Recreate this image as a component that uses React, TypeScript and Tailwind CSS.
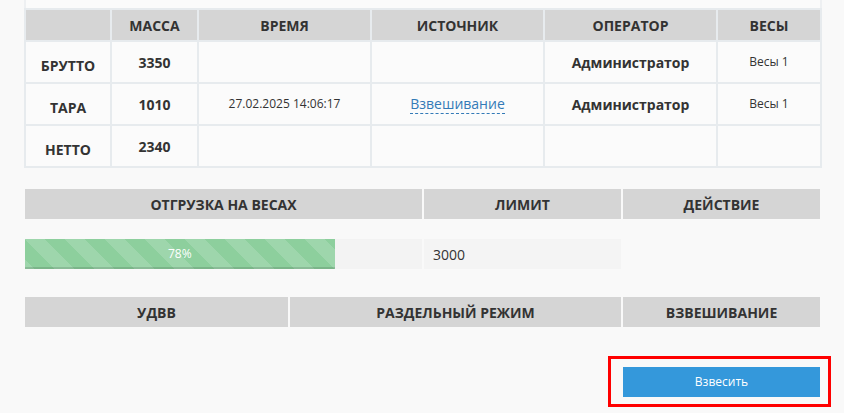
import React from 'react';

const headCell = 'bg-[#d5d5d5] flex items-center justify-center text-[14px] font-bold text-[#333]';
const bodyCell = 'bg-[#fbfbfb] flex items-center justify-center text-[#333]';

const rows = [
  { label: 'БРУТТО', mass: '3350', time: '', source: false, operator: 'Администратор', scales: 'Весы 1' },
  { label: 'ТАРА', mass: '1010', time: '27.02.2025 14:06:17', source: true, operator: 'Администратор', scales: 'Весы 1' },
  { label: 'НЕТТО', mass: '2340', time: '', source: false, operator: '', scales: '' },
];

export default function App() {
  const progress = 78;

  return (
    <div className="w-[844px] h-[413px] bg-[#f9f9f9] overflow-hidden" style={{ fontFamily: '"Open Sans", "Liberation Sans", sans-serif' }}>
      <div className="pl-[24px] w-[822px]">
        {/* tail of the panel above */}
        <div className="h-[8px] border-x-2 border-[#eef0f2] bg-[#fbfbfb]" />

        {/* weighing table */}
        <div className="grid grid-cols-[84px_85px_171px_171px_171px_102px] grid-rows-[30px_40px_40px_40px] gap-[2px] p-[2px] bg-[#e7ebee]">
          <div className={headCell} />
          <div className={headCell}>МАССА</div>
          <div className={headCell}>ВРЕМЯ</div>
          <div className={headCell}>ИСТОЧНИК</div>
          <div className={headCell}>ОПЕРАТОР</div>
          <div className={headCell}>ВЕСЫ</div>
          {rows.map((r) => (
            <React.Fragment key={r.label}>
              <div className={`${bodyCell} pt-[6px] text-[14px] font-bold`}>{r.label}</div>
              <div className={`${bodyCell} text-[14px] font-bold`}>{r.mass}</div>
              <div className={`${bodyCell} text-[12px]`}>{r.time}</div>
              <div className={bodyCell}>
                {r.source && (
                  <span className="text-[14px] leading-[19px] text-[#337ab7] border-b border-dashed border-[#337ab7]">Взвешивание</span>
                )}
              </div>
              <div className={`${bodyCell} text-[14px] font-bold`}>{r.operator}</div>
              <div className={`${bodyCell} text-[12px]`}>{r.scales}</div>
            </React.Fragment>
          ))}
        </div>
      </div>

      {/* shipment */}
      <div className="ml-[25px] mt-[21px] w-[795px]">
        <div className="grid grid-cols-[397px_197px_197px] gap-x-[2px]">
          <div className={`${headCell} h-[30px]`}>ОТГРУЗКА НА ВЕСАХ</div>
          <div className={`${headCell} h-[30px]`}>ЛИМИТ</div>
          <div className={`${headCell} h-[30px]`}>ДЕЙСТВИЕ</div>

          <div className="mt-[20px] h-[30px] bg-[#f3f3f3]">
            <div
              className="h-full flex items-center justify-center text-[12px] text-white bg-[#8dcf9d] bg-[linear-gradient(45deg,rgba(255,255,255,.15)_25%,transparent_25%,transparent_50%,rgba(255,255,255,.15)_50%,rgba(255,255,255,.15)_75%,transparent_75%,transparent)] bg-[length:40px_40px] shadow-[inset_0_-2px_0_rgba(0,0,0,0.12)]"
              style={{ width: `${progress}%` }}
            >
              {progress}%
            </div>
          </div>
          <div className="mt-[20px] h-[30px] bg-[#f4f4f4] flex items-center pl-[9px] text-[14px] text-[#333]">3000</div>
          <div className="mt-[20px] h-[30px]" />
        </div>
      </div>

      {/* mode */}
      <div className="ml-[25px] mt-[28px] w-[795px] grid grid-cols-[263px_331px_197px] gap-x-[2px]">
        <div className={`${headCell} h-[30px]`}>УДВВ</div>
        <div className={`${headCell} h-[30px]`}>РАЗДЕЛЬНЫЙ РЕЖИМ</div>
        <div className={`${headCell} h-[30px]`}>ВЗВЕШИВАНИЕ</div>
      </div>

      <div className="ml-[608px] mt-[29px] w-[223px] h-[51px] border-[3px] border-[#ff0000] pl-[12px] pt-[8px]">
        <button className="w-[197px] h-[30px] bg-[#3498db] text-white text-[12px] flex items-center justify-center">
          Взвесить
        </button>
      </div>
    </div>
  );
}
